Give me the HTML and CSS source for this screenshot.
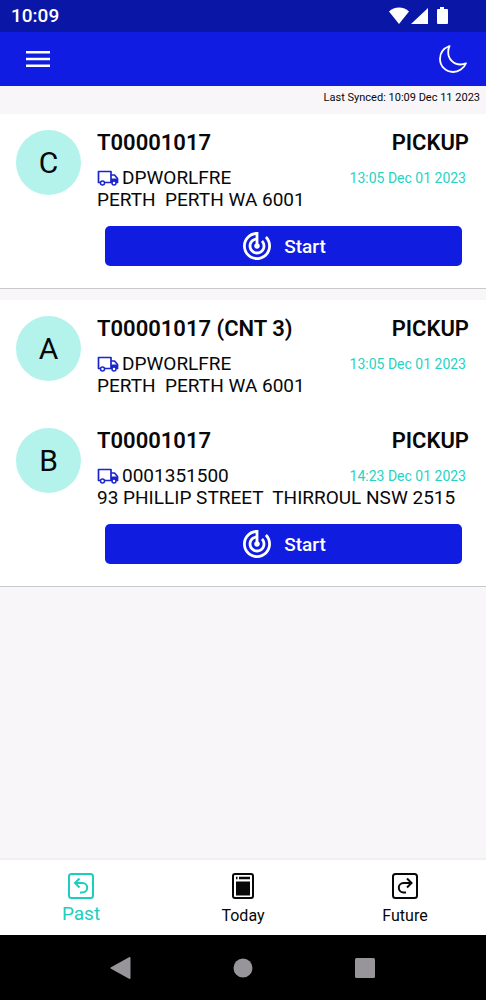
FILE: index.html
```
<!DOCTYPE html>
<html lang="en">
<head>
<meta charset="utf-8">
<meta name="viewport" content="width=device-width, initial-scale=1">
<title>Jobs</title>
<link rel="stylesheet" href="styles.css">
</head>
<body>
<svg class="defs" aria-hidden="true">
  <symbol id="truck" viewBox="0 0 22 16">
    <path d="M3 12.500H1.500V1.500H14V12.500H8M14 5H17.500L20.500 8.500V12.500H20M14 12.500H15" fill="none" stroke="currentColor" stroke-width="1.700" stroke-linejoin="round"/>
    <path d="M14 8.500H21V13H14Z" fill="currentColor"/>
    <circle cx="5.500" cy="13" r="2" fill="#fff" stroke="currentColor" stroke-width="1.500"/>
    <circle cx="17" cy="13" r="2" fill="#fff" stroke="currentColor" stroke-width="1.500"/>
  </symbol>
  <symbol id="track" viewBox="2 2 20 20">
    <path fill="currentColor" d="M19.070 4.930l-1.410 1.410C19.100 7.790 20 9.790 20 12c0 4.420-3.580 8-8 8s-8-3.580-8-8c0-4.080 3.050-7.440 7-7.930v2.020C8.160 6.570 6 9.030 6 12c0 3.310 2.690 6 6 6s6-2.690 6-6c0-1.660-.67-3.160-1.760-4.240l-1.410 1.410C15.550 9.900 16 10.900 16 12c0 2.210-1.790 4-4 4s-4-1.790-4-4c0-1.860 1.280-3.410 3-3.860v2.140c-.6.350-1 .98-1 1.720 0 1.100.9 2 2 2s2-.9 2-2c0-.74-.4-1.380-1-1.720V2h-1C6.480 2 2 6.480 2 12s4.480 10 10 10 10-4.480 10-10c0-2.760-1.120-5.260-2.930-7.070z"/>
  </symbol>
</svg>
<div class="screen">
  <div class="status">
    <span class="clock">10:09</span>
    <svg class="signals" width="60" height="18" viewBox="0 0 60 18" fill="#fff" aria-hidden="true">
      <path d="M0 4.500C5-.8 15-.8 20 4.500L10 17Z"/>
      <path d="M22 17L39 1V17Z"/>
      <path d="M51 0h4v2h3q1 0 1 1v13q0 1-1 1h-9q-1 0-1-1V3q0-1 1-1h2z"/>
    </svg>
  </div>
  <header class="appbar">
    <button class="icon-btn" type="button" aria-label="Menu">
      <svg width="24" height="18" viewBox="0 0 24 18" stroke="#fff" stroke-width="2.600"><path d="M0 2.200H24M0 9H24M0 15.800H24"/></svg>
    </button>
    <button class="icon-btn" type="button" aria-label="Dark mode">
      <svg width="28" height="28" viewBox="0 0 28 28" fill="none" stroke="#fff" stroke-width="1.800" stroke-linejoin="round"><path d="M10.500 1C4.500 3.200 1 8.200 1 14c0 7.200 5.800 13 13 13 5.600 0 11-3.500 13-8.700-2 .9-3.700 1.200-5.600 1.200C14.500 19.500 9.200 14 9.200 7.200c0-2.200.3-4.200 1.300-6.200Z"/></svg>
    </button>
  </header>
  <p class="synced">Last Synced: 10:09 Dec 11 2023</p>
  <main class="jobs">
    <section class="card">
      <article class="job">
        <div class="avatar">C</div>
        <div class="info">
          <div class="line"><h2 class="title">T00001017</h2><span class="title">PICKUP</span></div>
          <div class="line detail"><span class="ref"><svg class="truck" aria-hidden="true"><use href="#truck"/></svg>DPWORLFRE</span><time class="time">13:05 Dec 01 2023</time></div>
          <div class="address">PERTH  PERTH WA 6001</div>
        </div>
      </article>
      <button class="start" type="button"><svg class="track" aria-hidden="true"><use href="#track"/></svg>Start</button>
    </section>
    <section class="card">
      <article class="job">
        <div class="avatar">A</div>
        <div class="info">
          <div class="line"><h2 class="title">T00001017 (CNT 3)</h2><span class="title">PICKUP</span></div>
          <div class="line detail"><span class="ref"><svg class="truck" aria-hidden="true"><use href="#truck"/></svg>DPWORLFRE</span><time class="time">13:05 Dec 01 2023</time></div>
          <div class="address">PERTH  PERTH WA 6001</div>
        </div>
      </article>
      <article class="job">
        <div class="avatar">B</div>
        <div class="info">
          <div class="line"><h2 class="title">T00001017</h2><span class="title">PICKUP</span></div>
          <div class="line detail"><span class="ref"><svg class="truck" aria-hidden="true"><use href="#truck"/></svg>0001351500</span><time class="time">14:23 Dec 01 2023</time></div>
          <div class="address">93 PHILLIP STREET  THIRROUL NSW 2515</div>
        </div>
      </article>
      <button class="start" type="button"><svg class="track" aria-hidden="true"><use href="#track"/></svg>Start</button>
    </section>
  </main>
  <nav class="tabs">
    <a class="tab active" href="#past">
      <svg width="26" height="26" viewBox="0 0 26 26" fill="none" stroke="currentColor" stroke-width="2" aria-hidden="true"><rect x="1" y="1" width="24" height="24" rx="2.500"/><path d="M11.500 5.500L7 10L11.500 14.500M7 10H14.500a4.700 4.700 0 0 1 0 9.400H12"/></svg>
      <span>Past</span>
    </a>
    <a class="tab" href="#today">
      <svg width="26" height="26" viewBox="0 0 26 26" fill="none" stroke="currentColor" stroke-width="2" aria-hidden="true"><rect x="3" y="1" width="20" height="24" rx="2"/><path d="M6 5H7.500M9 5H20" stroke-width="2.400"/><rect x="6" y="8.500" width="14" height="14" fill="currentColor" stroke="none"/></svg>
      <span>Today</span>
    </a>
    <a class="tab" href="#future">
      <svg width="26" height="26" viewBox="0 0 26 26" fill="none" stroke="currentColor" stroke-width="2" aria-hidden="true"><rect x="1" y="1" width="24" height="24" rx="2.500"/><path d="M15 5.500L19.500 10L15 14.500M19.500 10H11.500a4.700 4.700 0 0 0 0 9.400H14"/></svg>
      <span>Future</span>
    </a>
  </nav>
  <div class="sysnav">
    <button class="sys" type="button" aria-label="Back"><svg width="22" height="22" viewBox="0 0 22 22"><path d="M1.500 11L19.500 1V21Z" stroke-width="2" stroke-linejoin="round"/></svg></button>
    <button class="sys" type="button" aria-label="Home"><svg width="22" height="22" viewBox="0 0 22 22"><circle cx="11" cy="11" r="9.500"/></svg></button>
    <button class="sys" type="button" aria-label="Recent apps"><svg width="22" height="22" viewBox="0 0 22 22"><rect x="1" y="1" width="20" height="20" rx="1.500"/></svg></button>
  </div>
</div>
</body>
</html>
```
FILE: styles.css
```
* { box-sizing: border-box; }
body { margin: 0; font-family: Roboto, "Noto Sans", sans-serif; color: #080808; background: #f8f6f9; }
button { border: 0; padding: 0; background: none; font: inherit; color: inherit; cursor: pointer; }
svg { display: block; flex: none; }
h2, p { margin: 0; }
.defs { display: none; }
.screen { min-height: 100vh; display: flex; flex-direction: column; }

.status { height: 32px; padding: 0 36px 0 11px; display: flex; align-items: center; justify-content: space-between; background: #0a17a6; color: #fff; }
.clock { font-size: 19px; font-weight: 500; line-height: 34px; }
.signals { margin-right: 1px; }

.appbar { height: 54px; padding: 0 19px 0 26px; display: flex; align-items: center; justify-content: space-between; background: #101ce2; }
.synced { padding: 4px 6px 8px; font-size: 11px; line-height: 16px; text-align: right; }

.jobs { flex: 1; display: flex; flex-direction: column; gap: 11px; }
.card { background: #fff; padding-bottom: 22px; border-bottom: 1px solid #c8c8cb; }
.job { display: flex; gap: 16px; padding: 16px 17px 15px 16px; }
.avatar { flex: none; width: 65px; height: 65px; border-radius: 50%; background: #b3f3ec; font-size: 30px; line-height: 65px; text-align: center; }
.info { flex: 1; min-width: 0; }
.line { display: flex; justify-content: space-between; align-items: center; }
.title { font-size: 22px; font-weight: 600; line-height: 26px; }
.detail { margin-top: 11px; }
.ref { display: flex; align-items: center; gap: 3px; font-size: 19px; line-height: 22px; }
.truck { width: 22px; height: 16px; color: #1a25cc; }
.time { margin-right: 3px; font-size: 14px; color: #27d3c3; }
.address { font-size: 19px; line-height: 22px; white-space: pre; }
.start { display: flex; align-items: center; justify-content: center; gap: 13px; height: 40px; width: calc(100% - 129px); margin-left: 105px; padding-left: 2px; border-radius: 5px; background: #101ce0; color: #fff; font-size: 19px; font-weight: 500; }
.track { width: 28px; height: 28px; }

.tabs { display: flex; height: 77px; background: #fff; border-top: 2px solid #f1eff1; }
.tab { flex: 1; padding-top: 13px; display: flex; flex-direction: column; align-items: center; gap: 5px; color: #080808; text-decoration: none; font-size: 16px; line-height: 24px; }
.active { color: #1dcdbd; font-size: 19px; gap: 3px; }

.sysnav { display: flex; justify-content: center; gap: 100px; height: 65px; background: #000; }
.sys { fill: #98959a; stroke: #98959a; stroke-width: 0; }
```
